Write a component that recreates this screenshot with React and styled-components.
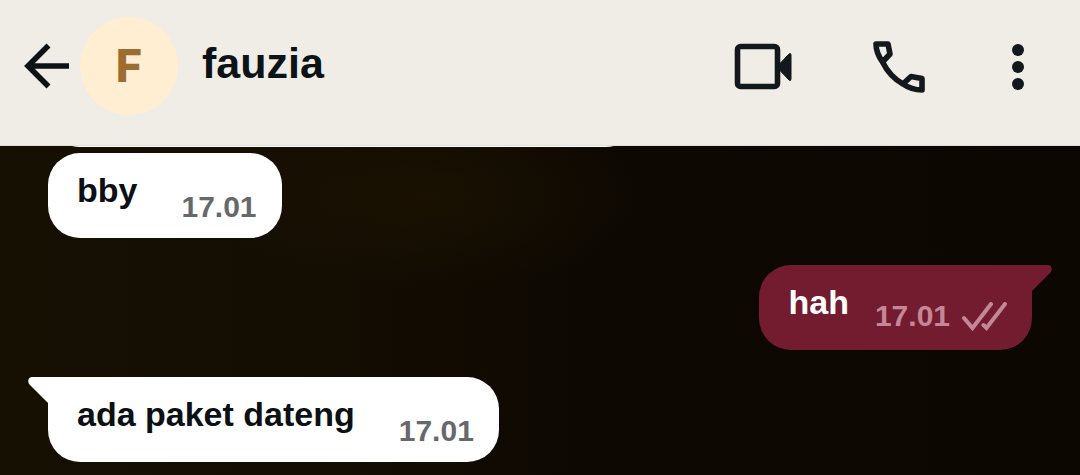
import React from 'react';
import styled, { createGlobalStyle, css } from 'styled-components';

const messages = [
    { id: 1, text: 'bby', time: '17.01' },
    { id: 2, text: 'hah', time: '17.01', own: true, first: true },
    { id: 3, text: 'ada paket dateng', time: '17.01', first: true },
];

const BackIcon = () => (
    <svg width="46" height="46" viewBox="0 0 46 46" fill="none" stroke="#0c1317" strokeWidth="5.6" aria-hidden="true">
        <path d="M24.5 2.5 4 23 24.5 43.5M4 23H45" />
    </svg>
);

const VideoIcon = () => (
    <svg width="60" height="52" viewBox="0 0 60 52" aria-hidden="true">
        <rect x="3.5" y="6.5" width="40" height="40" rx="3" fill="none" stroke="#12181b" strokeWidth="5.6" />
        <path d="M45 24.5 55 14Q57 12.5 57 15V39Q57 41.5 55 40L45 29.5Z" fill="#12181b" stroke="#12181b" />
    </svg>
);

const PhoneIcon = () => (
    <svg width="60" height="52" viewBox="0 0 60 52" overflow="visible" fill="none" stroke="#12181b" strokeWidth="5.6" strokeLinejoin="round" aria-hidden="true">
        <path d="M4 4H16L18 14 10.5 22C15 31 22 39 31 44L39 36.5 50 38.5V50C42 50 36 47.5 31 44C22 39 15 31 10.5 22C7 17 4 12 4 4Z" />
    </svg>
);

const MenuIcon = () => (
    <svg width="16" height="52" viewBox="0 0 16 52" fill="#12181b" aria-hidden="true">
        <circle cx="8" cy="10" r="6" />
        <circle cx="8" cy="27" r="6" />
        <circle cx="8" cy="44" r="6" />
    </svg>
);

const ReadIcon = () => (
    <svg width="45" height="32" viewBox="0 0 45 32" fill="none" stroke="#c58698" strokeWidth="4" strokeLinecap="round" role="img" aria-label="Read">
        <path d="M2 16 10.5 26 29 2M21.5 23 24.5 26 43 2" />
    </svg>
);

const Message = ({ text, time, own, first }) => (
    <Bubble $own={ own } $first={ first }>
        { first && (
            <Tail $own={ own } viewBox="0 0 22 28" aria-hidden="true">
                <path d="M0 0H18C21.5 0 23 4.5 20.5 7.5L2 26V28H0Z" />
            </Tail>
        ) }
        <Text>{ text }</Text>
        <Meta $own={ own }>
            <time>{ time }</time>
            { own && <ReadIcon /> }
        </Meta>
    </Bubble>
);

const App = () => (
    <Page>
        <GlobalStyle />
        <Header>
            <IconButton aria-label="Back"><BackIcon /></IconButton>
            <Avatar>F</Avatar>
            <Name>fauzia</Name>
            <Actions>
                <IconButton aria-label="Video call"><VideoIcon /></IconButton>
                <IconButton aria-label="Call"><PhoneIcon /></IconButton>
                <IconButton aria-label="Menu"><MenuIcon /></IconButton>
            </Actions>
        </Header>
        <Chat>
            <ScrolledBubble />
            { messages.map(message => <Message key={ message.id } { ...message } />) }
        </Chat>
    </Page>
);

const GlobalStyle = createGlobalStyle`
    * {
        box-sizing: border-box;
    }
    body {
        margin: 0;
        background: #0d0802;
        font-family: "Liberation Sans", Arial, sans-serif;
        font-weight: 700;
    }
`;

const Page = styled.div`
    display: flex;
    flex-direction: column;
    min-height: 100vh;
`;

const Header = styled.header`
    display: flex;
    align-items: center;
    padding: 17px 54px 30px 24px;
    border-bottom: 1px solid #e0deda;
    background: #f0ede6;
`;

const IconButton = styled.button`
    display: flex;
    padding: 0;
    border: none;
    background: none;
    cursor: pointer;
`;

const Avatar = styled.div`
    display: flex;
    align-items: center;
    justify-content: center;
    width: 98px;
    height: 98px;
    margin-left: 10px;
    border-radius: 50%;
    background: #ffeed2;
    color: #9d6c30;
    font-family: Inter, sans-serif;
    font-size: 45px;
    font-weight: 800;
    line-height: 52px;
`;

const Name = styled.h1`
    flex: 1;
    margin: 0;
    padding: 0 0 6px 24px;
    color: #0c1317;
    font-size: 43px;
    line-height: 50px;
`;

const Actions = styled.div`
    display: flex;
    gap: 78px;
`;

const Chat = styled.main`
    display: flex;
    flex: 1;
    flex-direction: column;
    align-items: flex-start;
    overflow: hidden;
    padding: 0 48px 13px;
    background:
        radial-gradient(ellipse at 40% 15%, rgba(34, 23, 0, 0.5), transparent 24%),
        linear-gradient(90deg, #161003 0%, #140d02 30%, #0d0802 55%, #0d0702 100%);
`;

const Bubble = styled.article`
    position: relative;
    display: flex;
    gap: 44px;
    min-height: 85px;
    margin-top: 6px;
    padding: 16px 25px 13px 29px;
    border-radius: 32px;
    background: #fff;
    color: #0b1014;
    fill: #fff;

    ${ ({ $first }) => $first && css`
        margin-top: 27px;
        border-top-left-radius: 0;
    `}

    ${ ({ $own }) => $own && css`
        gap: 26px;
        align-self: flex-end;
        padding-bottom: 16px;
        border-radius: 32px 0 32px 32px;
        background: #731b2f;
        color: #fff;
        fill: #731b2f;
    `}
`;

/* the message above, scrolled almost out of view */
const ScrolledBubble = styled(Bubble)`
    width: 60%;
    margin-top: -84px;
    flex-shrink: 0;
`;

const Tail = styled.svg`
    position: absolute;
    top: 0;
    right: 100%;
    width: 22px;
    height: 28px;
    margin-right: -2px;
    overflow: visible;
    transform: scaleX(-1);

    ${ ({ $own }) => $own && css`
        right: auto;
        left: 100%;
        margin: 0 0 0 -2px;
        transform: none;
    `}
`;

const Text = styled.p`
    margin: 0;
    font-size: 34px;
    line-height: 42px;
`;

const Meta = styled.div`
    display: flex;
    align-items: flex-end;
    align-self: flex-end;
    gap: 12px;
    color: ${ ({ $own }) => $own ? '#c58698' : '#65696b' };
    font-size: 30px;
    line-height: 36px;
`;

export default App;
